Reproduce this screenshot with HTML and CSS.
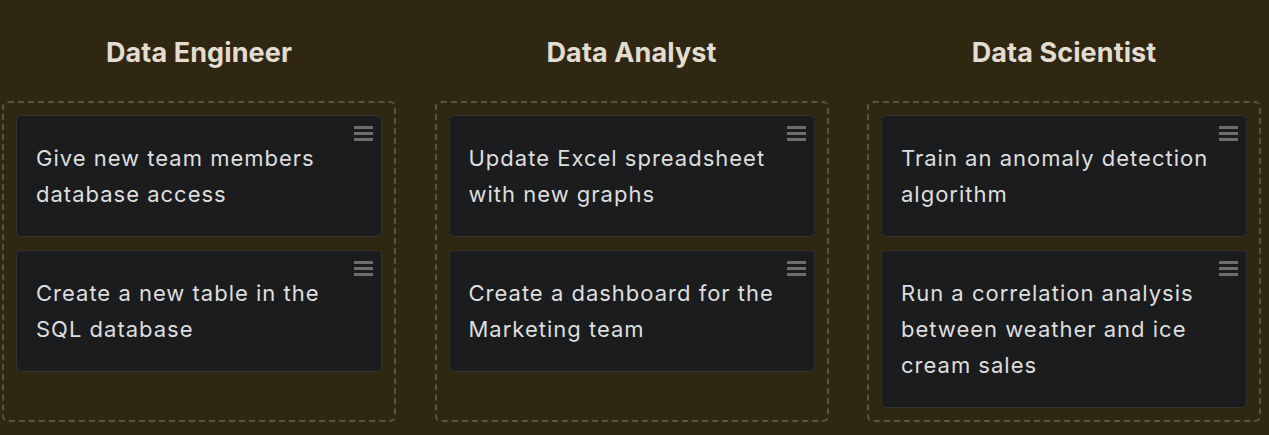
FILE: index.html
```html
<!DOCTYPE html>
<html>
<head>
<meta charset="utf-8">
<link rel="stylesheet" href="styles.css">
</head>
<body>
<div class="board">
  <section class="column">
    <h2 class="column-title">Data Engineer</h2>
    <div class="dropzone">
      <div class="card"><span class="handle"><i></i><i></i><i></i></span><p>Give new team members database access</p></div>
      <div class="card"><span class="handle"><i></i><i></i><i></i></span><p>Create a new table in the SQL database</p></div>
    </div>
  </section>
  <section class="column">
    <h2 class="column-title">Data Analyst</h2>
    <div class="dropzone">
      <div class="card"><span class="handle"><i></i><i></i><i></i></span><p>Update Excel spreadsheet with new graphs</p></div>
      <div class="card"><span class="handle"><i></i><i></i><i></i></span><p>Create a dashboard for the Marketing team</p></div>
    </div>
  </section>
  <section class="column">
    <h2 class="column-title">Data Scientist</h2>
    <div class="dropzone">
      <div class="card"><span class="handle"><i></i><i></i><i></i></span><p>Train an anomaly detection algorithm</p></div>
      <div class="card"><span class="handle"><i></i><i></i><i></i></span><p>Run a correlation analysis between weather and ice cream sales</p></div>
    </div>
  </section>
</div>
</body>
</html>
```
FILE: styles.css
```css
html, body {
  margin: 0;
  background: #302713;
}
body {
  font-family: Inter, "Noto Sans", sans-serif;
  color: #dcdcdc;
  height: 435px;
  overflow: hidden;
}
.board {
  display: grid;
  grid-template-columns: repeat(3, 394px);
  column-gap: 38.5px;
  padding: 0 9px 0 2px;
  height: 422px;
}
.column {
  display: flex;
  flex-direction: column;
}
.column-title {
  margin: 38px 0 33px;
  font-size: 27px;
  line-height: 30px;
  font-weight: 700;
  text-align: center;
  color: #e2ddd0;
  letter-spacing: 0.1px;
}
.dropzone {
  flex: 1;
  border: 2px dashed #5c5339;
  border-radius: 6px;
  padding: 12px;
  display: flex;
  flex-direction: column;
  gap: 13px;
}
.card {
  position: relative;
  background: #1b1c1e;
  border: 1px solid #34332d;
  border-radius: 5px;
  padding: 24px 18px 24px 19px;
}
.card p {
  margin: 0;
  font-size: 22px;
  line-height: 36px;
  letter-spacing: 1px;
  color: #dedede;
}
.handle {
  position: absolute;
  top: 10px;
  right: 8px;
  width: 19px;
  display: flex;
  flex-direction: column;
  gap: 3px;
}
.handle i {
  display: block;
  height: 3px;
  background: #6e6e6e;
}
```
